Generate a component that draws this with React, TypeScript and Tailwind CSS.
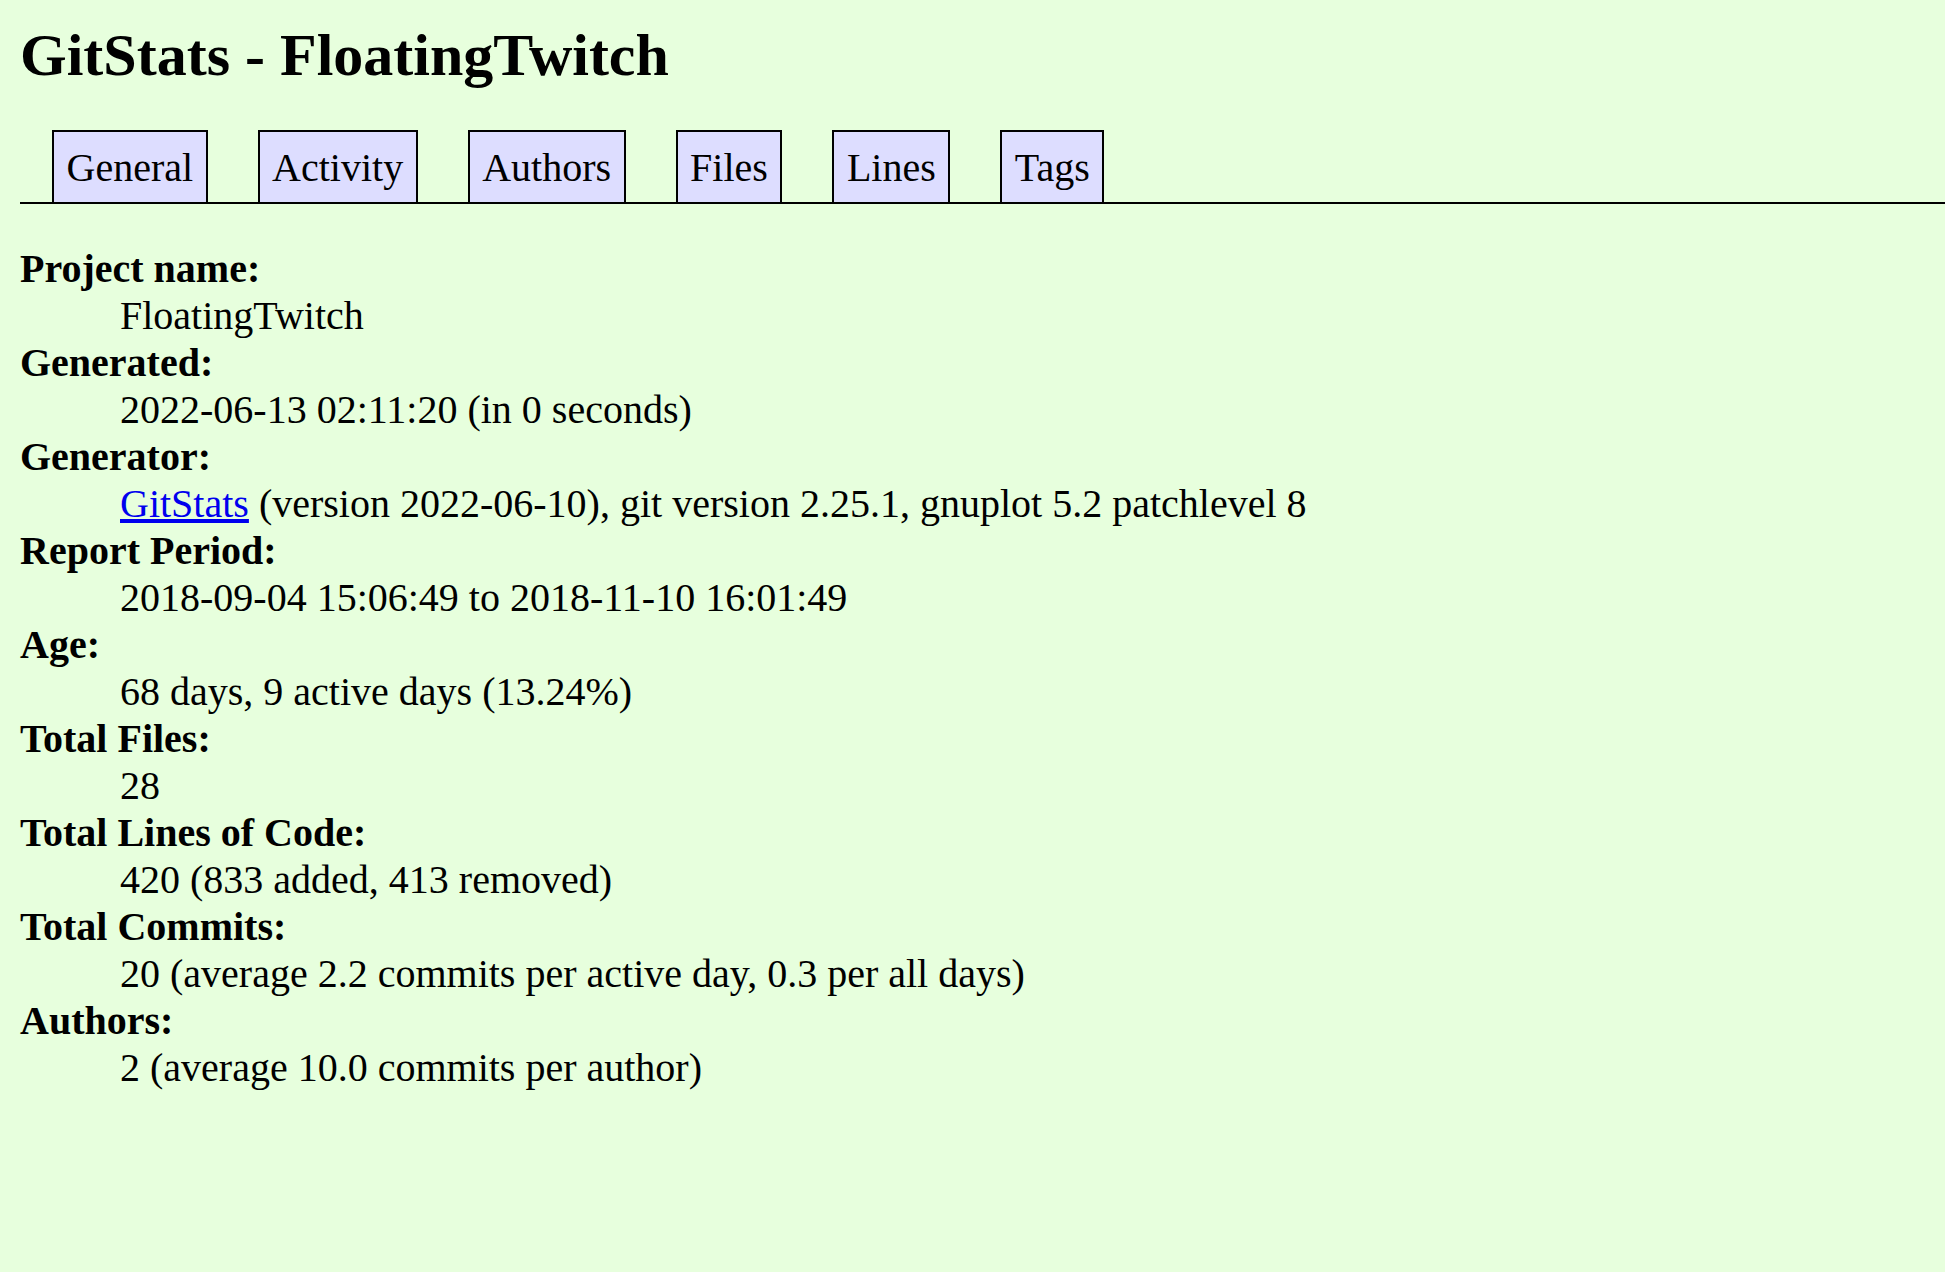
const tabs = ["General", "Activity", "Authors", "Files", "Lines", "Tags"];

const rows: { label: string; value: React.ReactNode }[] = [
  { label: "Project name", value: "FloatingTwitch" },
  { label: "Generated", value: "2022-06-13 02:11:20 (in 0 seconds)" },
  {
    label: "Generator",
    value: (
      <>
        <a href="#" className="text-[#0000ee] underline">
          GitStats
        </a>{" "}
        (version 2022-06-10), git version 2.25.1, gnuplot 5.2 patchlevel 8
      </>
    ),
  },
  { label: "Report Period", value: "2018-09-04 15:06:49 to 2018-11-10 16:01:49" },
  { label: "Age", value: "68 days, 9 active days (13.24%)" },
  { label: "Total Files", value: "28" },
  { label: "Total Lines of Code", value: "420 (833 added, 413 removed)" },
  { label: "Total Commits", value: "20 (average 2.2 commits per active day, 0.3 per all days)" },
  { label: "Authors", value: "2 (average 10.0 commits per author)" },
];

export default function App() {
  return (
    <div className="min-h-screen bg-[#e7ffdd] pl-5 pt-[21px] text-black font-['Liberation_Serif',serif]">
      <h1 className="text-[60px] leading-[69px] font-bold">GitStats - FloatingTwitch</h1>

      {/* nav tabs sitting on the rule */}
      <nav className="mt-[40px] flex items-end gap-[50px] border-b-2 border-black pl-[32px]">
        {tabs.map((t) => (
          <a
            key={t}
            href="#"
            className="border-2 border-b-0 border-black bg-[#ddddff] px-[12.5px] pt-[14px] pb-[12px] text-[40px] leading-[44px] text-black"
          >
            {t}
          </a>
        ))}
      </nav>

      <dl className="mt-[41px] text-[40px] leading-[47px]">
        {rows.map((r) => (
          <div key={r.label}>
            <dt className="font-bold">{r.label}:</dt>
            <dd className="pl-[100px]">{r.value}</dd>
          </div>
        ))}
      </dl>
    </div>
  );
}
